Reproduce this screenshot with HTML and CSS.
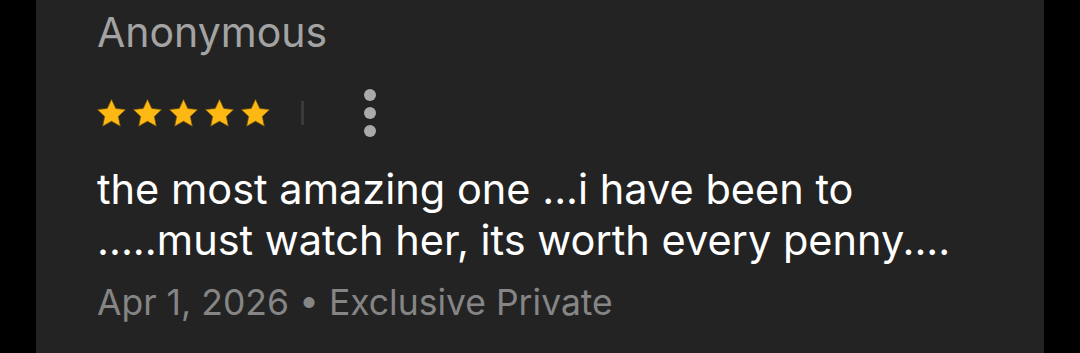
FILE: index.html
```html
<!DOCTYPE html>
<html lang="en">
<head>
  <meta charset="UTF-8">
  <meta name="viewport" content="width=device-width, initial-scale=1.0">
  <title>Review</title>
  <link rel="stylesheet" href="styles.css">
</head>
<body>
  <div class="page">
    <div class="review">
      <div class="author">Anonymous</div>
      <div class="meta-row">
        <div class="stars">
          <svg class="star" viewBox="2 2 20 20"><path d="M12 2.2l2.95 6.3 6.85.8-5.07 4.72 1.37 6.78L12 17.38 5.9 20.8l1.37-6.78L2.2 9.3l6.85-.8z"/></svg>
          <svg class="star" viewBox="2 2 20 20"><path d="M12 2.2l2.95 6.3 6.85.8-5.07 4.72 1.37 6.78L12 17.38 5.9 20.8l1.37-6.78L2.2 9.3l6.85-.8z"/></svg>
          <svg class="star" viewBox="2 2 20 20"><path d="M12 2.2l2.95 6.3 6.85.8-5.07 4.72 1.37 6.78L12 17.38 5.9 20.8l1.37-6.78L2.2 9.3l6.85-.8z"/></svg>
          <svg class="star" viewBox="2 2 20 20"><path d="M12 2.2l2.95 6.3 6.85.8-5.07 4.72 1.37 6.78L12 17.38 5.9 20.8l1.37-6.78L2.2 9.3l6.85-.8z"/></svg>
          <svg class="star" viewBox="2 2 20 20"><path d="M12 2.2l2.95 6.3 6.85.8-5.07 4.72 1.37 6.78L12 17.38 5.9 20.8l1.37-6.78L2.2 9.3l6.85-.8z"/></svg>
        </div>
        <span class="divider"></span>
        <button class="more" aria-label="More options">
          <span class="dot"></span>
          <span class="dot"></span>
          <span class="dot"></span>
        </button>
      </div>
      <p class="text">the most amazing one ...i have been to .....must watch her, its worth every penny....</p>
      <div class="info">Apr 1, 2026 &bull; Exclusive Private</div>
    </div>
  </div>
</body>
</html>
```

FILE: styles.css
```css
body {
  margin: 0;
  background-color: #000;
  font-family: 'Inter', 'Roboto', sans-serif;
}

.page {
  margin: 0 36px;
  height: 353px;
  background-color: #232323;
  overflow: hidden;
}

.review {
  padding: 7px 0 0 61px;
  width: 880px;
}

.author {
  font-size: 41px;
  line-height: 50px;
  color: #a3a3a3;
}

.meta-row {
  display: flex;
  align-items: center;
  margin-top: 32px;
  height: 48px;
}

.stars {
  display: flex;
  gap: 7px;
}

.star {
  width: 29px;
  height: 29px;
  fill: #fdb813;
  stroke: #6b4f0c;
  stroke-width: 0.5;
  stroke-linejoin: round;
}

.divider {
  width: 3px;
  height: 24px;
  margin-left: 31px;
  background-color: #3a3a3a;
}

.more {
  display: flex;
  flex-direction: column;
  gap: 6px;
  margin-left: 60px;
  padding: 0;
  border: 0;
  background: none;
}

.dot {
  width: 12px;
  height: 12px;
  border-radius: 50%;
  background-color: #aaa;
}

.text {
  margin: 27px 0 0;
  font-size: 41.5px;
  line-height: 51px;
  color: #fff;
}

.info {
  margin-top: 15px;
  font-size: 35.5px;
  line-height: 44px;
  color: #858585;
}
```
